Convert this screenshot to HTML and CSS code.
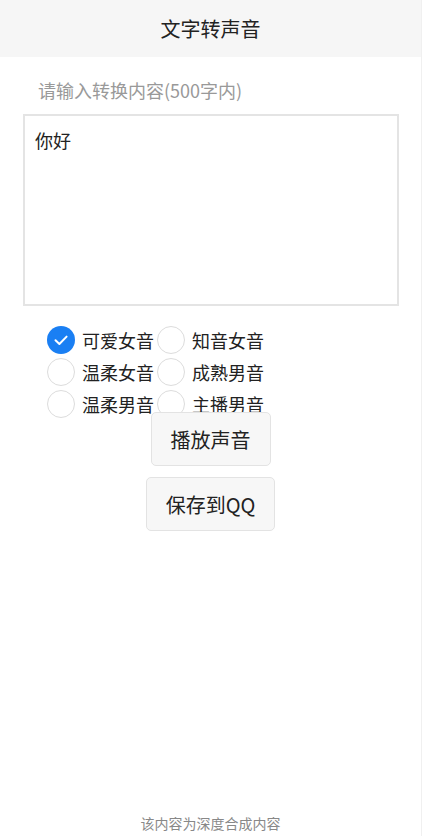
FILE: index.html
```html
<!DOCTYPE html>
<html lang="zh-CN">
<head>
    <meta charset="UTF-8">
    <meta name="viewport" content="width=device-width, initial-scale=1.0">
    <title>文字转声音</title>
    <link rel="stylesheet" href="styles.css">
</head>
<body>
    <div class="page">
        <header class="title-bar">
            <h1>文字转声音</h1>
        </header>

        <div class="input-label">请输入转换内容(500字内)</div>
        <div class="text-box">你好</div>

        <div class="voice-list">
            <div class="voice-item">
                <span class="radio checked">
                    <svg viewBox="0 0 28 28" width="28" height="28"><path d="M8.5 14.2 L12.4 18 L19.6 10.6" fill="none" stroke="#fff" stroke-width="2" stroke-linecap="round" stroke-linejoin="round"/></svg>
                </span>
                <span class="voice-name">可爱女音</span>
            </div>
            <div class="voice-item">
                <span class="radio"></span>
                <span class="voice-name">知音女音</span>
            </div>
            <div class="voice-item">
                <span class="radio"></span>
                <span class="voice-name">温柔女音</span>
            </div>
            <div class="voice-item">
                <span class="radio"></span>
                <span class="voice-name">成熟男音</span>
            </div>
            <div class="voice-item">
                <span class="radio"></span>
                <span class="voice-name">温柔男音</span>
            </div>
            <div class="voice-item">
                <span class="radio"></span>
                <span class="voice-name">主播男音</span>
            </div>
        </div>

        <div class="actions">
            <button class="btn">播放声音</button>
            <button class="btn">保存到QQ</button>
        </div>

        <footer class="notice">该内容为深度合成内容</footer>
    </div>
</body>
</html>
```

FILE: styles.css
```css
body {
    margin: 0;
    padding: 0;
    background: #fff;
    font-family: "Noto Sans CJK SC", "Noto Sans", sans-serif;
    color: #222;
}

.page {
    min-height: 836px;
    display: flex;
    flex-direction: column;
    box-sizing: border-box;
    border-right: 1px solid #f0f0f0;
}

.title-bar {
    height: 57px;
    background: #f6f6f6;
    display: flex;
    align-items: center;
    justify-content: center;
}

.title-bar h1 {
    margin: 0;
    font-size: 20px;
    font-weight: normal;
    color: #222;
}

.input-label {
    margin: 20px 0 0 38px;
    font-size: 18px;
    line-height: 26px;
    color: #999;
}

.text-box {
    margin: 11px 0 0 23px;
    width: 376px;
    height: 192px;
    box-sizing: border-box;
    border: 2px solid #e4e4e4;
    padding: 12px 10px;
    font-size: 18px;
    line-height: 24px;
    color: #222;
}

.voice-list {
    margin: 18px 0 0 47px;
    height: 88px;
    display: grid;
    grid-template-columns: 110px 110px;
    grid-auto-rows: 32px;
}

.voice-item {
    display: flex;
    align-items: center;
    gap: 7px;
}

.radio {
    width: 28px;
    height: 28px;
    box-sizing: border-box;
    border: 1.5px solid #dcdcdc;
    border-radius: 50%;
    background: #fff;
    flex-shrink: 0;
    display: flex;
    align-items: center;
    justify-content: center;
}

.radio.checked {
    border: none;
    background: #1a7ff3;
}

.voice-name {
    font-size: 18px;
    color: #222;
    white-space: nowrap;
}

.actions {
    display: flex;
    flex-direction: column;
    align-items: center;
    gap: 11px;
}

.btn {
    height: 54px;
    padding: 0 19px;
    font-family: inherit;
    font-size: 20px;
    color: #222;
    background: #f7f7f7;
    border: 1px solid #e3e3e3;
    border-radius: 5px;
}

.notice {
    margin-top: auto;
    padding-bottom: 3px;
    text-align: center;
    font-size: 14px;
    line-height: 20px;
    color: #888;
}
```
